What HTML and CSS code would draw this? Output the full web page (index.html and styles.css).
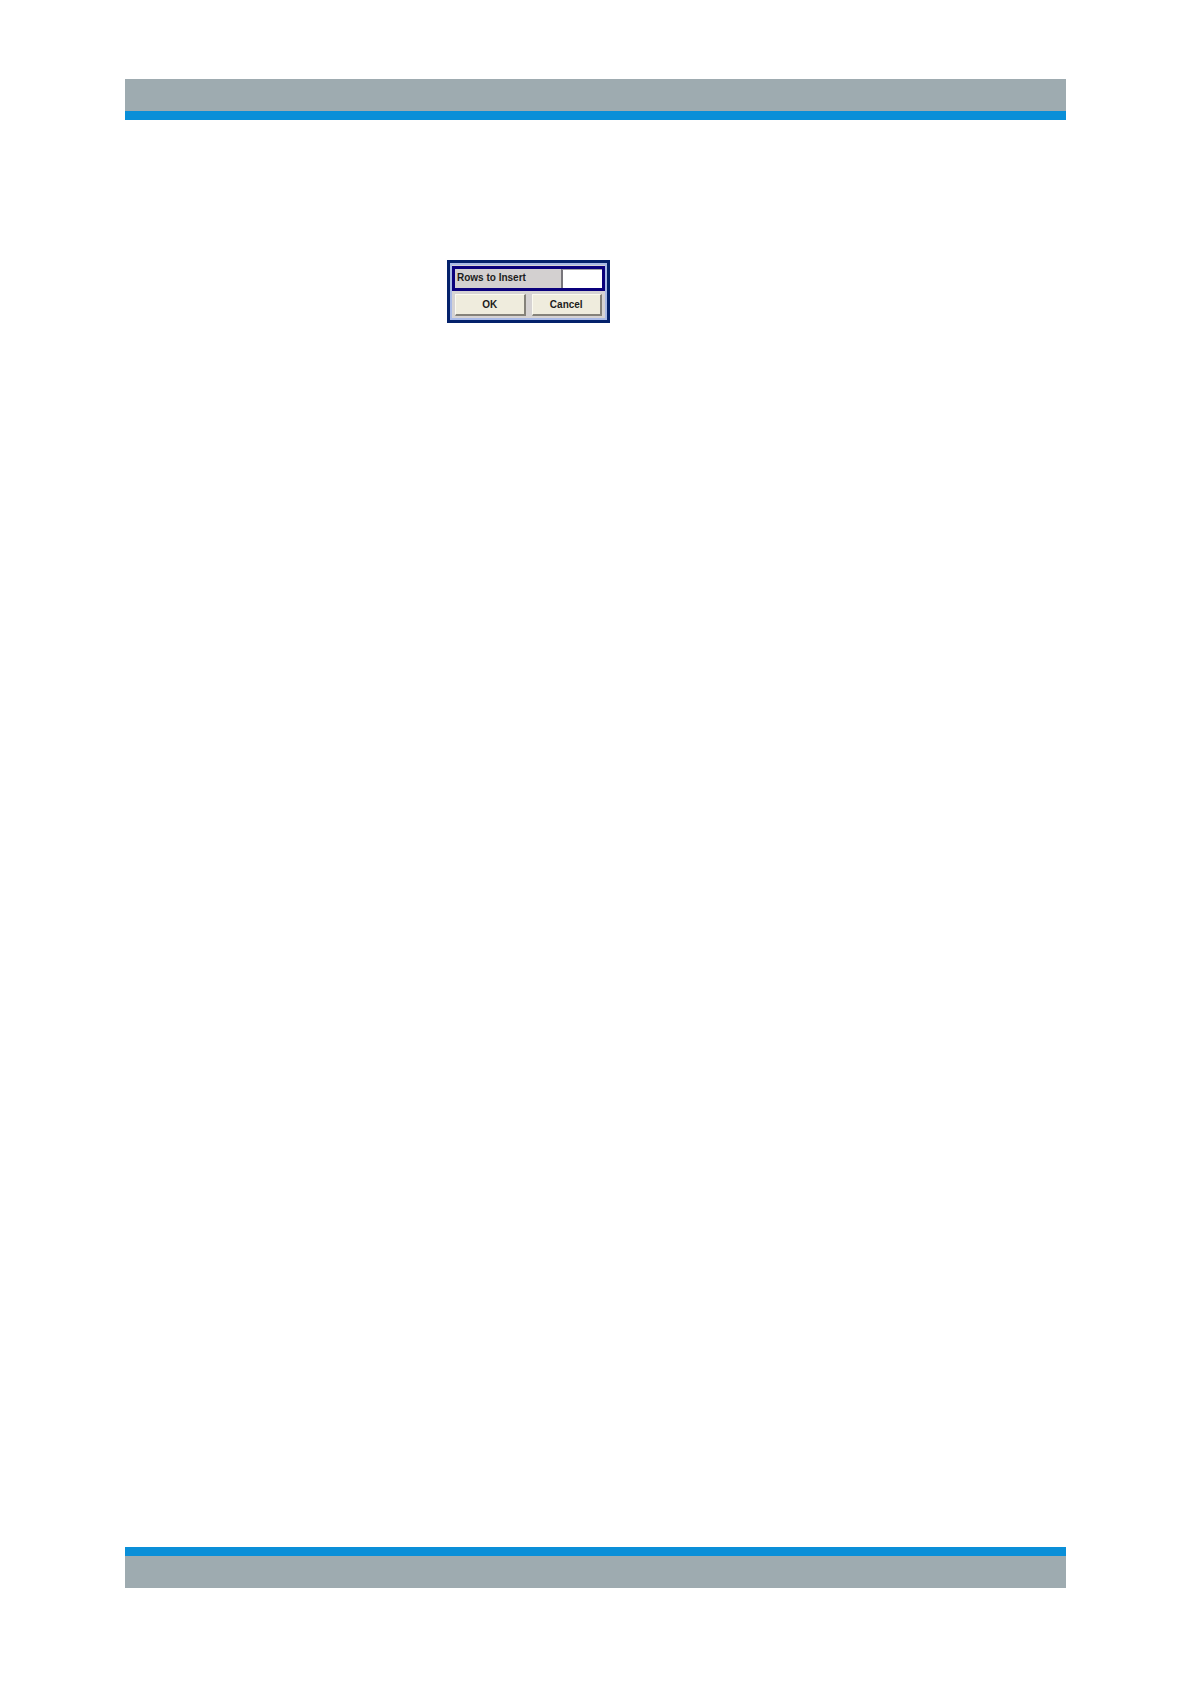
FILE: index.html
```html
<!DOCTYPE html>
<html lang="en">
<head>
  <meta charset="utf-8">
  <title>Rows to Insert</title>
  <link rel="stylesheet" href="styles.css">
</head>
<body>
  <header class="bar bar-top"></header>
  <main class="content">
    <form class="dialog">
      <div class="field">
        <label for="rows">Rows to Insert</label>
        <input type="text" id="rows" name="rows">
      </div>
      <div class="buttons">
        <button type="submit">OK</button>
        <button type="button">Cancel</button>
      </div>
    </form>
  </main>
  <footer class="bar bar-bottom"></footer>
</body>
</html>
```

FILE: styles.css
```css
* {
  box-sizing: border-box;
}
body {
  display: flex;
  flex-direction: column;
  min-height: 100vh;
  margin: 0;
  padding: 79px 125px 96px;
  background-color: #fff;
  font-family: "Liberation Sans", Arial, sans-serif;
}

/* page bars */
.bar {
  height: 41px;
  background-color: #9eabb0;
}
.bar-top {
  border-bottom: 9px solid #0a8fd8;
}
.bar-bottom {
  border-top: 9px solid #0a8fd8;
}
.content {
  flex: 1;
  padding: 140px 0 0 322px;
}

/* dialog */
.dialog {
  display: flex;
  flex-direction: column;
  gap: 3px;
  width: 163px;
  padding: 3px 2px 4px;
  border: 3px solid #04216b;
  background-color: #d6d3d3;
  box-shadow: inset 0 0 0 2px #a9bae6;
}
.dialog label,
.dialog button {
  font-size: 10px;
  font-weight: bold;
  line-height: 12px;
  color: #1c1c1c;
}
.field {
  display: flex;
  height: 25px;
  border: 3px solid #0a007c;
  background-color: #d3d0d0;
}
.field label {
  flex: 1;
  padding: 3px 2px;
}
.field input {
  width: 41px;
  padding: 0 2px;
  border: 0;
  border-top: 1px solid #a5a3a6;
  border-left: 2px solid #77757a;
  background-color: #fff;
  font-size: 10px;
}
.buttons {
  display: flex;
  gap: 6px;
  padding: 0 3px;
}
.buttons button {
  flex: 1;
  height: 22px;
  padding: 0;
  border: 1px solid #fbfaf0;
  border-right: 2px solid #85827a;
  border-bottom: 2px solid #85827a;
  background-color: #efecdd;
}
```
